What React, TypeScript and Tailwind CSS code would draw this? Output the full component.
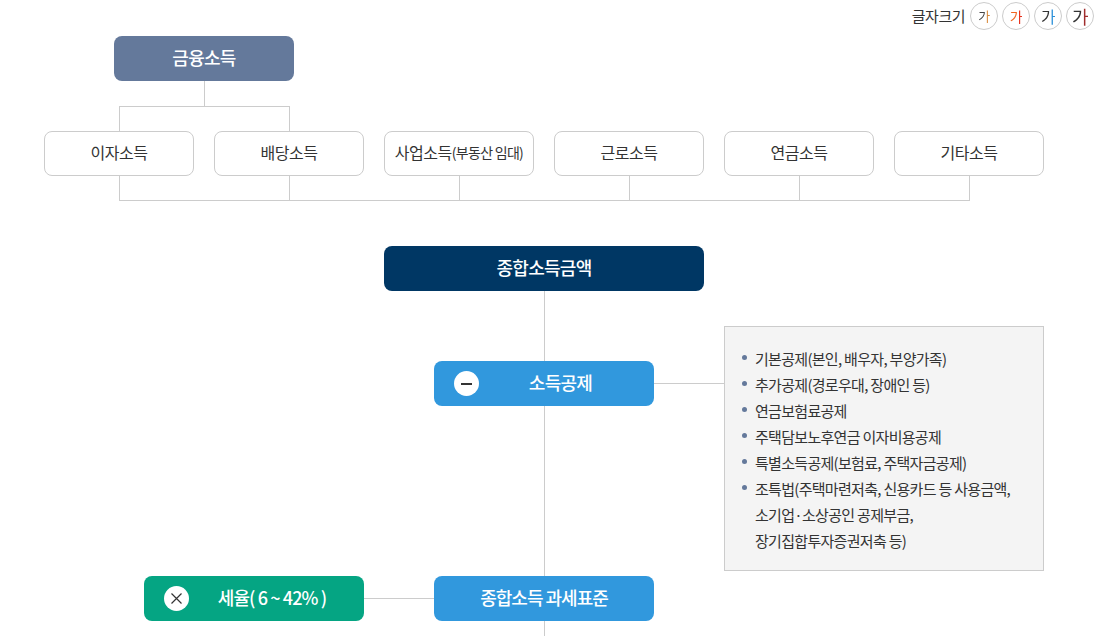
const lineColor = 'bg-[#cccccc]';

const incomeTypes = ['이자소득', '배당소득', '사업소득', '근로소득', '연금소득', '기타소득'];

const deductions = [
  '기본공제(본인, 배우자, 부양가족)',
  '추가공제(경로우대, 장애인 등)',
  '연금보험료공제',
  '주택담보노후연금 이자비용공제',
  '특별소득공제(보험료, 주택자금공제)',
  '조특법(주택마련저축, 신용카드 등 사용금액,',
];

function FontSizes() {
  const buttons = [
    'text-[13px] bg-[linear-gradient(90deg,#444444_58%,#d98a3c_58%)]',
    'text-[14px] bg-[linear-gradient(90deg,#f0641e_58%,#e8301c_58%)]',
    'text-[16px] bg-[linear-gradient(90deg,#333333_58%,#2a8fd8_58%)]',
    'text-[18px] bg-[linear-gradient(90deg,#333333_58%,#a02c2c_58%)]',
  ];

  return (
    <div className="flex h-[36px] items-start justify-end gap-1 pt-[2px] pr-[20px]">
      <span className="mr-[1px] text-[15px] leading-[28px] text-[#333333]">글자크기</span>
      {buttons.map((b, i) => (
        <span
          key={i}
          className="flex h-[28px] w-[28px] items-center justify-center rounded-full border border-[#cccccc] bg-white"
        >
          <span className={`bg-clip-text text-transparent ${b}`}>가</span>
        </span>
      ))}
    </div>
  );
}

function Box({ children, className }: { children: React.ReactNode; className: string }) {
  return (
    <div className={`flex h-[45px] items-center justify-center rounded-lg pb-[2px] text-[18px] font-medium tracking-[-0.7px] text-white ${className}`}>
      {children}
    </div>
  );
}

function Badge({ children }: { children: React.ReactNode }) {
  return (
    <span className="absolute top-[10px] left-[20px] flex h-[25px] w-[25px] items-center justify-center rounded-full bg-white text-[#333333]">
      {children}
    </span>
  );
}

export default function App() {
  return (
    <div className="h-[636px] w-[1114px] overflow-hidden bg-white font-['Noto_Sans_CJK_KR','Noto_Sans',sans-serif] tracking-[-0.5px] text-[#333333]">
      <FontSizes />

      <div className="ml-[114px] w-[180px]">
        <Box className="bg-[#64799b]">금융소득</Box>
      </div>
      <div className={`ml-[204px] h-[25px] w-px ${lineColor}`} />
      <div className="ml-[119px] h-[25px] w-[171px] border-x border-t border-[#cccccc]" />

      <div className="ml-[44px] flex gap-5">
        {incomeTypes.map((name, i) => (
          <div
            key={name}
            className="flex h-[45px] w-[150px] items-center justify-center rounded-lg border border-[#cccccc] bg-white pb-[3px] text-[16px]"
          >
            {name}
            {i === 2 && <span className="text-[14px] tracking-[-0.7px]">(부동산 임대)</span>}
          </div>
        ))}
      </div>

      <div className="ml-[119px] flex h-[25px]">
        {[0, 1, 2, 3, 4].map((i) => (
          <div key={i} className="w-[170px] border-b border-l border-[#cccccc]" />
        ))}
        <div className={`w-px ${lineColor}`} />
      </div>

      <div className="mt-[45px] ml-[384px] w-[320px]">
        <Box className="bg-[#003764]">종합소득금액</Box>
      </div>

      <div className="ml-[144px] flex items-start">
        <div className="w-[220px] pt-[285px]">
          <Box className="relative bg-[#05a583]">
            <Badge>
              <svg width="13" height="13" viewBox="0 0 13 13" fill="none" stroke="currentColor" strokeWidth="1.2">
                <path d="M1.5 1.5l10 10M11.5 1.5l-10 10" />
              </svg>
            </Badge>
            <span className="pl-[36px] tracking-[-0.9px]">세율( 6 ~ 42% )</span>
          </Box>
        </div>
        <div className="w-[70px] pt-[307px]">
          <div className={`h-px ${lineColor}`} />
        </div>

        <div className="flex w-[220px] flex-col items-center">
          <div className={`h-[70px] w-px ${lineColor}`} />
          <div className="w-full">
            <Box className="relative bg-[#3198dd]">
              <Badge>
                <span className="h-[2px] w-[11px] bg-[#333333]" />
              </Badge>
              <span className="pl-[33px]">소득공제</span>
            </Box>
          </div>
          <div className={`h-[170px] w-px ${lineColor}`} />
          <div className="w-full">
            <Box className="bg-[#3198dd] tracking-[-1px]">종합소득 과세표준</Box>
          </div>
          <div className={`h-[15px] w-px ${lineColor}`} />
        </div>

        <div className="w-[70px] pt-[92px]">
          <div className={`h-px ${lineColor}`} />
        </div>

        <div className="mt-[35px] h-[245px] w-[320px] border border-[#cccccc] bg-[#f4f4f4] pt-[19px] pl-[17px] text-[15px] leading-[26px] tracking-[-0.7px]">
          <ul>
            {deductions.map((item) => (
              <li key={item} className="relative pl-[13px]">
                <span className="absolute top-[9px] left-0 h-[5px] w-[5px] rounded-full bg-[#64799b]" />
                {item}
              </li>
            ))}
            <li className="pl-[13px]">소기업·소상공인 공제부금,</li>
            <li className="pl-[13px]">장기집합투자증권저축 등)</li>
          </ul>
        </div>
      </div>
    </div>
  );
}
